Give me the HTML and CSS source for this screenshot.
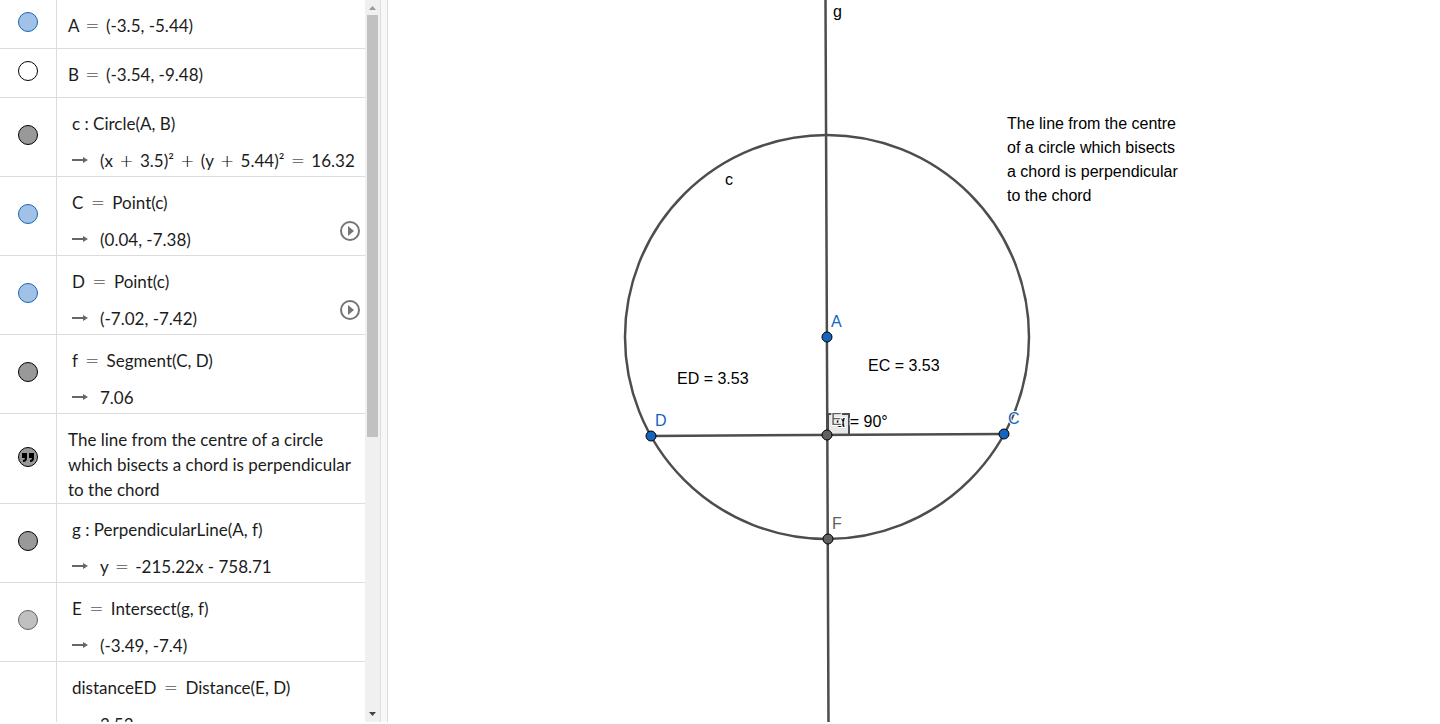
FILE: index.html
```html
<!DOCTYPE html>
<html lang="en">
<head>
<meta charset="utf-8">
<title>Perpendicular from the centre to a chord</title>
<link rel="stylesheet" href="styles.css">
</head>
<body>
<main class="app">
  <section class="algebra" aria-label="Algebra view">
    <ul class="rows">
      <li class="row">
        <div class="gutter"><button class="marble blue" aria-label="Toggle A"></button></div>
        <div class="plain">A <span class="op">=</span> (-3.5, -5.44)</div>
      </li>
      <li class="row">
        <div class="gutter"><button class="marble hidden" aria-label="Toggle B"></button></div>
        <div class="plain">B <span class="op">=</span> (-3.54, -9.48)</div>
      </li>
      <li class="row">
        <div class="gutter"><button class="marble dark" aria-label="Toggle c"></button></div>
        <div class="entry">
          <div class="definition">c : Circle(A, B)</div>
          <div class="value"><svg class="arrow" viewBox="0 0 16 8"><path d="M0 4h13" /><path class="head" d="M11 1l5 3-5 3z" /></svg><span>(x <span class="op">+</span> 3.5)² <span class="op">+</span> (y <span class="op">+</span> 5.44)² <span class="op">=</span> 16.32</span></div>
        </div>
      </li>
      <li class="row">
        <div class="gutter"><button class="marble blue" aria-label="Toggle C"></button></div>
        <div class="entry">
          <div class="definition">C <span class="op eq">=</span> Point(c)</div>
          <div class="value"><svg class="arrow" viewBox="0 0 16 8"><path d="M0 4h13" /><path class="head" d="M11 1l5 3-5 3z" /></svg><span>(0.04, -7.38)</span></div>
        </div>
        <button class="play" aria-label="Animate C"><svg viewBox="0 0 20 20"><circle cx="10" cy="10" r="9" /><path d="M8 5l6 5-6 5z" /></svg></button>
      </li>
      <li class="row">
        <div class="gutter"><button class="marble blue" aria-label="Toggle D"></button></div>
        <div class="entry">
          <div class="definition">D <span class="op eq">=</span> Point(c)</div>
          <div class="value"><svg class="arrow" viewBox="0 0 16 8"><path d="M0 4h13" /><path class="head" d="M11 1l5 3-5 3z" /></svg><span>(-7.02, -7.42)</span></div>
        </div>
        <button class="play" aria-label="Animate D"><svg viewBox="0 0 20 20"><circle cx="10" cy="10" r="9" /><path d="M8 5l6 5-6 5z" /></svg></button>
      </li>
      <li class="row">
        <div class="gutter"><button class="marble dark" aria-label="Toggle f"></button></div>
        <div class="entry">
          <div class="definition">f <span class="op eq">=</span> Segment(C, D)</div>
          <div class="value"><svg class="arrow" viewBox="0 0 16 8"><path d="M0 4h13" /><path class="head" d="M11 1l5 3-5 3z" /></svg><span>7.06</span></div>
        </div>
      </li>
      <li class="row">
        <div class="gutter"><button class="marble dark" aria-label="Toggle text"><svg class="quote" viewBox="0 0 18 18"><path d="M3 5h5v5q0 4-4 4v-2q2 0 2-2H3zM10 5h5v5q0 4-4 4v-2q2 0 2-2h-3z" /></svg></button></div>
        <div class="plain prose">The line from the centre of a circle<br>which bisects a chord is perpendicular<br>to the chord</div>
      </li>
      <li class="row">
        <div class="gutter"><button class="marble dark" aria-label="Toggle g"></button></div>
        <div class="entry">
          <div class="definition">g : PerpendicularLine(A, f)</div>
          <div class="value"><svg class="arrow" viewBox="0 0 16 8"><path d="M0 4h13" /><path class="head" d="M11 1l5 3-5 3z" /></svg><span>y <span class="op">=</span> -215.22x - 758.71</span></div>
        </div>
      </li>
      <li class="row">
        <div class="gutter"><button class="marble light" aria-label="Toggle E"></button></div>
        <div class="entry">
          <div class="definition">E <span class="op eq">=</span> Intersect(g, f)</div>
          <div class="value"><svg class="arrow" viewBox="0 0 16 8"><path d="M0 4h13" /><path class="head" d="M11 1l5 3-5 3z" /></svg><span>(-3.49, -7.4)</span></div>
        </div>
      </li>
      <li class="row">
        <div class="gutter"></div>
        <div class="entry">
          <div class="definition">distanceED <span class="op eq">=</span> Distance(E, D)</div>
          <div class="value"><svg class="arrow" viewBox="0 0 16 8"><path d="M0 4h13" /></svg><span>3.53</span></div>
        </div>
      </li>
    </ul>
    <div class="scrollbar">
      <button class="step" aria-label="Scroll up"><svg viewBox="0 0 15 15"><path class="up" d="M4 10l3.500-4 3.500 4z" /></svg></button>
      <div class="track"><div class="thumb"></div></div>
      <button class="step" aria-label="Scroll down"><svg viewBox="0 0 15 15"><path class="down" d="M4 5l3.500 4 3.500-4z" /></svg></button>
    </div>
  </section>
  <div class="divider"></div>
  <section class="graphics" aria-label="Graphics view">
    <svg class="canvas">
      <circle class="line" cx="439" cy="337" r="202" />
      <path class="angle" d="M440 414H461V435H440z" />
      <path class="line" d="M437.500 0L440.500 722M262.500 436L616 434" />
      <g class="label">
        <text x="445" y="17">g</text>
        <text x="337" y="185">c</text>
        <text x="289" y="384">ED = 3.53</text>
        <text x="480" y="371">EC = 3.53</text>
        <text x="448" y="427">α = 90°</text>
      </g>
      <g class="label">
        <text x="619" y="129">The line from the centre</text>
        <text x="619" y="153">of a circle which bisects</text>
        <text x="619" y="177">a chord is perpendicular</text>
        <text x="619" y="201">to the chord</text>
      </g>
      <g class="label point-label">
        <text x="443" y="327">A</text>
        <text x="267" y="426">D</text>
        <text x="620" y="424">C</text>
      </g>
      <g class="label derived-label">
        <text x="443" y="425">E</text>
        <text x="444" y="529">F</text>
      </g>
      <g class="point">
        <circle cx="439" cy="337" r="5" />
        <circle cx="263" cy="436" r="5" />
        <circle cx="616" cy="434" r="5" />
      </g>
      <g class="point derived">
        <circle cx="439" cy="435" r="5" />
        <circle cx="440" cy="539" r="5" />
      </g>
    </svg>
  </section>
</main>
</body>
</html>
```
FILE: styles.css
```css
* {
  box-sizing: border-box;
}

body {
  margin: 0;
  background: #fff;
  color: #1c1c1c;
  font-family: Lato, sans-serif;
  font-size: 17px;
}

button {
  padding: 0;
  border: 0;
  background: none;
}

.app {
  display: flex;
  height: calc(100vh - 2px);
  overflow: hidden;
}

.algebra {
  display: flex;
  flex: 0 0 380px;
}

.rows {
  flex: 1;
  height: 100%;
  margin: 0;
  padding: 0;
  overflow: hidden;
  list-style: none;
}

.row {
  display: flex;
  position: relative;
  border-bottom: 1px solid #dcdcdc;
  white-space: nowrap;
}

.gutter {
  display: flex;
  flex: 0 0 57px;
  align-items: center;
  justify-content: center;
  padding-bottom: 4px;
  border-right: 1px solid #dcdcdc;
}

.marble {
  display: block;
  width: 20px;
  height: 20px;
  border: 1px solid #000;
  border-radius: 50%;
}

.blue {
  border-color: #1565c0;
  background: #a1c1e6;
}

.hidden {
  background: #fff;
}

.dark {
  background: #999;
}

.light {
  border-color: #616161;
  background: #c0c0c0;
}

.quote {
  display: block;
  width: 18px;
  height: 18px;
}

.plain {
  padding: 13px 0 10px 11px;
  line-height: 25px;
}

.prose {
  padding-bottom: 1px;
}

.entry {
  padding: 7px 0 0 15px;
}

.definition {
  height: 38px;
  line-height: 38px;
}

.value {
  display: flex;
  align-items: center;
  height: 33px;
  padding-top: 1px;
}

.op {
  margin: 0 2px;
  font-family: "DejaVu Sans Light", "DejaVu Sans", sans-serif;
  font-size: 17px;
  font-weight: 200;
  line-height: 1;
  color: #000;
}

.eq {
  margin: 0 3px;
}

.arrow {
  width: 16px;
  height: 8px;
  margin-right: 12px;
  fill: none;
  stroke: #666;
  stroke-width: 2;
}

.arrow .head {
  fill: #666;
  stroke: none;
}

.play {
  position: absolute;
  right: 5px;
  bottom: 14px;
  width: 20px;
  height: 20px;
}

.play svg {
  display: block;
  fill: none;
  stroke: #757575;
  stroke-width: 2;
}

.play path {
  fill: #757575;
  stroke: none;
}

.scrollbar {
  display: flex;
  flex: 0 0 15px;
  flex-direction: column;
  background: #f0f0f0;
}

.step {
  height: 15px;
}

.step svg {
  display: block;
  width: 15px;
  height: 15px;
}

.up {
  fill: #999;
}

.down {
  fill: #444;
}

.track {
  flex: 1;
  padding: 0 2px;
}

.thumb {
  height: 61%;
  background: #c1c1c1;
}

.divider {
  flex: 0 0 8px;
  border: solid #dcdcdc;
  border-width: 0 1px;
  background: #f8f8f8;
}

.graphics {
  flex: 1;
  min-width: 0;
}

.canvas {
  display: block;
  width: 100%;
  height: 100%;
}

.line {
  fill: none;
  stroke: #4d4d4d;
  stroke-width: 2.5;
}

.angle {
  fill: #e6e6e6;
  stroke: #4d4d4d;
  stroke-width: 2;
}

.label {
  fill: #000;
  stroke: #fff;
  stroke-width: 2;
  paint-order: stroke;
  font-family: "Liberation Sans", Arial, sans-serif;
  font-size: 16px;
}

.point-label {
  fill: #1565c0;
}

.derived-label {
  fill: #616161;
}

.point {
  fill: #1565c0;
  stroke: #000;
}

.derived {
  fill: #616161;
}
```
